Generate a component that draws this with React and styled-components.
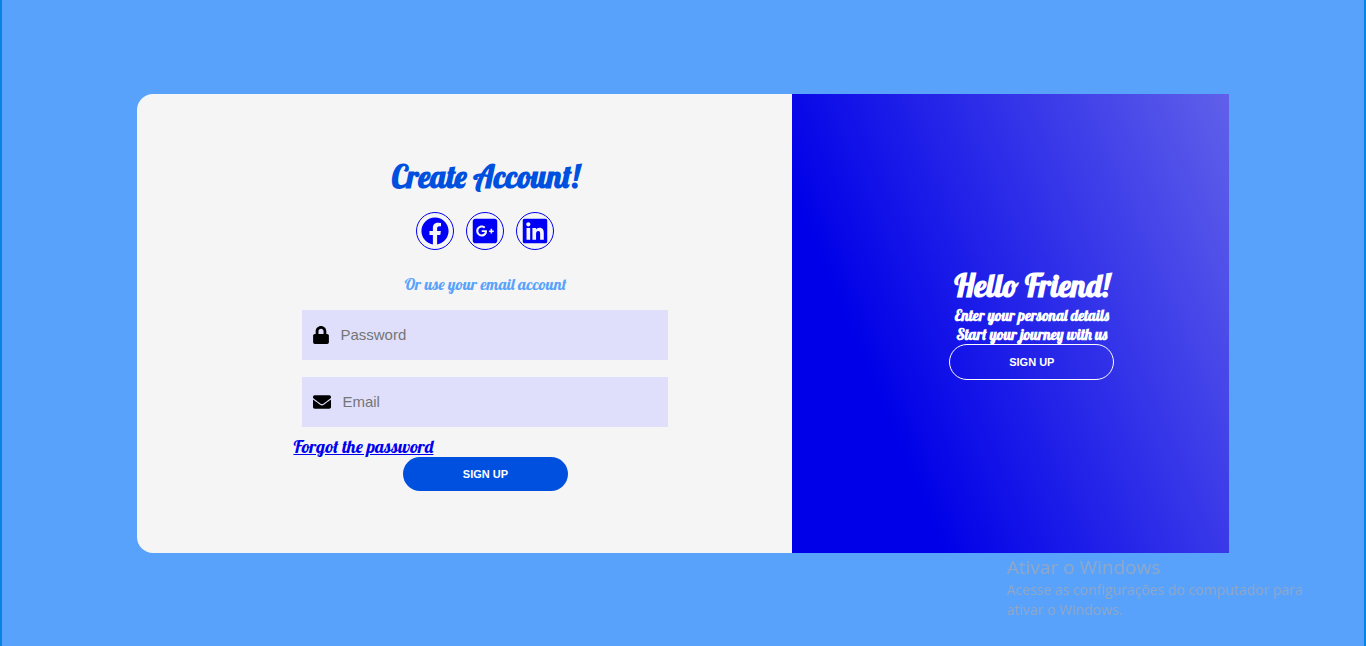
import React from "react";
import styled, { createGlobalStyle } from "styled-components";
import { FaFacebook, FaGooglePlusSquare, FaLinkedin, FaLock, FaEnvelope } from "react-icons/fa";

const GlobalStyle = createGlobalStyle`
  * { box-sizing: border-box; margin: 0; padding: 0; }
  body {
    background: #58a2fb;
    font-family: Lobster, "Liberation Serif", serif;
  }
`;

const Page = styled.div`
  display: flex;
  align-items: center;
  justify-content: center;
  min-height: 100vh;
  padding-top: 1px;
  border: solid #0584e4;
  border-width: 0 2px;
`;

const Card = styled.main`
  display: flex;
  width: 80vw;
  min-height: 71vh;
`;

const FormPanel = styled.section`
  width: 60%;
  display: flex;
  flex-direction: column;
  align-items: center;
  justify-content: center;
  padding-left: 42px;
  background: #f5f5f5;
  border-radius: 16px 0 0 16px;
`;

const WelcomePanel = styled.section`
  width: 40%;
  display: flex;
  flex-direction: column;
  align-items: center;
  justify-content: center;
  padding: 0 0 2px 42px;
  color: #fff;
  text-align: center;
  background: linear-gradient(67deg, #0000e8 24%, #6060ea 100%);
`;

const Title = styled.h1`
  font-size: 31px;
  line-height: 40px;
  font-weight: 700;
  color: ${(p) => p.$color};
`;

const Socials = styled.nav`
  display: flex;
  gap: 12px;
  margin: 15px 0 24px;
`;

const SocialLink = styled.a`
  display: flex;
  align-items: center;
  justify-content: center;
  width: 38px;
  height: 38px;
  border: 1px solid #0000f0;
  border-radius: 50%;
  color: #0000f5;

  svg {
    width: auto;
    height: 28px;
  }
`;

const Hint = styled.p`
  font-size: 16px;
  line-height: 20px;
  color: #58a2fb;
`;

const Form = styled.form`
  display: flex;
  flex-direction: column;
  align-items: center;
  width: 384px;
  max-width: 100%;
  margin-top: 16px;
`;

const Field = styled.label`
  display: flex;
  align-items: center;
  gap: 11px;
  width: 366px;
  max-width: 100%;
  height: 50px;
  margin-bottom: 17px;
  padding: 0 11px;
  background: #dfdffc;
  color: #000;

  svg {
    flex: none;
    width: ${(p) => p.$iconWidth}px;
    height: 18px;
  }
`;

const Input = styled.input`
  flex: 1;
  min-width: 0;
  border: 0;
  outline: 0;
  background: transparent;
  font: 15px "Liberation Sans", Arial, sans-serif;

  &::placeholder {
    color: #757575;
  }
`;

const ForgotLink = styled.a`
  align-self: flex-start;
  margin-top: -7px;
  font-size: 18px;
  line-height: 20px;
  color: #0000ee;
  text-decoration: underline;
`;

const Button = styled.button`
  width: 165px;
  height: ${(p) => (p.$outline ? 36 : 34)}px;
  border: ${(p) => (p.$outline ? "1px solid #fff" : "0")};
  border-radius: 18px;
  background: ${(p) => (p.$outline ? "transparent" : "#0050e0")};
  color: #fff;
  font: bold 11px "Liberation Sans", Arial, sans-serif;
  text-transform: uppercase;
  cursor: pointer;
`;

const Message = styled.p`
  font-size: 15px;
  line-height: 19px;
  font-weight: 700;
`;

const ActivationNotice = styled.aside`
  position: fixed;
  right: 37px;
  bottom: 26px;
  width: 322px;
  color: #91a7c6;
  font: 14px/20px "Open Sans", sans-serif;
  pointer-events: none;
`;

const NoticeTitle = styled.p`
  font-size: 19px;
  line-height: 25px;
`;

export default function App() {
  return (
    <>
      <GlobalStyle />
      <Page>
        <Card>
          <FormPanel>
            <Title $color="#0050e0">Create Account!</Title>
            <Socials>
              <SocialLink href="#facebook" aria-label="Facebook"><FaFacebook /></SocialLink>
              <SocialLink href="#google" aria-label="Google Plus"><FaGooglePlusSquare /></SocialLink>
              <SocialLink href="#linkedin" aria-label="LinkedIn"><FaLinkedin /></SocialLink>
            </Socials>
            <Hint>Or use your email account</Hint>
            <Form onSubmit={(e) => e.preventDefault()}>
              <Field $iconWidth={16}>
                <FaLock />
                <Input type="password" placeholder="Password" aria-label="Password" />
              </Field>
              <Field $iconWidth={18}>
                <FaEnvelope />
                <Input type="email" placeholder="Email" aria-label="Email" />
              </Field>
              <ForgotLink href="#forgot">Forgot the password</ForgotLink>
              <Button type="submit">Sign up</Button>
            </Form>
          </FormPanel>
          <WelcomePanel>
            <Title as="h2" $color="#fff">Hello Friend!</Title>
            <Message>Enter your personal details</Message>
            <Message>Start your journey with us</Message>
            <Button type="button" $outline>Sign up</Button>
          </WelcomePanel>
        </Card>
      </Page>
      <ActivationNotice>
        <NoticeTitle>Ativar o Windows</NoticeTitle>
        <p>Acesse as configurações do computador para ativar o Windows.</p>
      </ActivationNotice>
    </>
  );
}
